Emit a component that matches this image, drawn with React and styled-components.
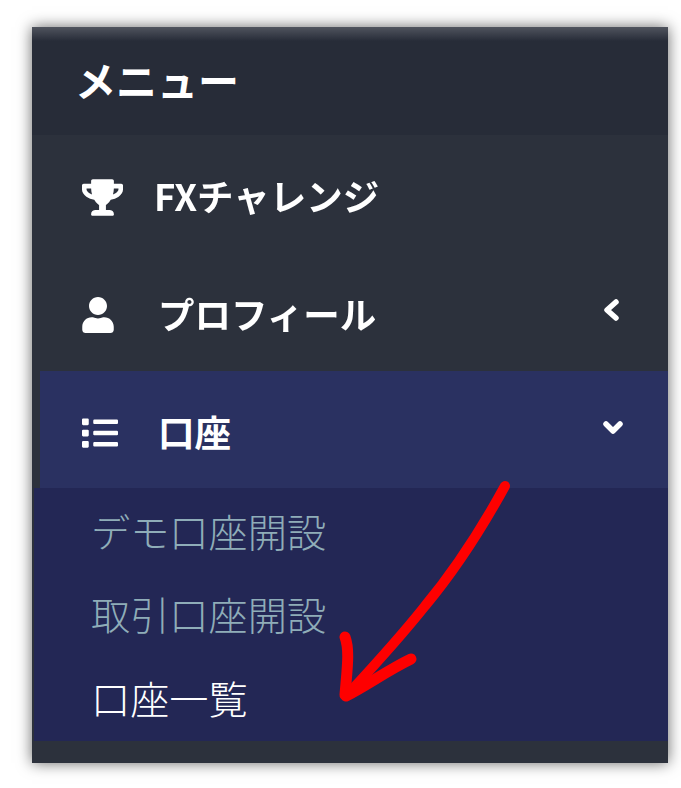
import React from "react";
import styled, { createGlobalStyle } from "styled-components";
import { FaTrophy, FaUser, FaList } from "react-icons/fa";

const GlobalStyle = createGlobalStyle`
  html, body {
    margin: 0;
    padding: 0;
    background: #fff;
  }
  body {
    font-family: "Noto Sans CJK JP", "Noto Sans", sans-serif;
  }
`;

const Page = styled.div`
  width: 681px;
  height: 788px;
  box-sizing: border-box;
  padding: 27px 13px 25px 32px;
  overflow: hidden;
`;

const Panel = styled.nav`
  position: relative;
  height: 736px;
  display: flex;
  flex-direction: column;
  background: #2c313c;
  box-shadow: 0 0 14px rgba(0, 0, 0, 0.6);
  filter: blur(0.4px);
`;

const Header = styled.div`
  height: 108px;
  box-sizing: border-box;
  padding: 0 43px 4px;
  display: flex;
  align-items: center;
  background: linear-gradient(#50545e 0, #272c38 14px);
  color: #fff;
  font-size: 41px;
  font-weight: 700;
`;

const Row = styled.div`
  height: ${(p) => (p.$active ? "117px" : "118px")};
  box-sizing: border-box;
  margin-left: ${(p) => (p.$active ? "8px" : "0")};
  padding: 0 ${(p) => (p.$active ? "45px" : "47px")} 0 ${(p) => (p.$active ? "42px" : "50px")};
  display: flex;
  align-items: center;
  background: ${(p) => (p.$active ? "#2a3161" : "transparent")};
  color: #fff;
`;

const IconSlot = styled.span`
  width: ${(p) => p.$width}px;
  margin-left: ${(p) => p.$shift || 0}px;
  flex: none;
  display: flex;
  align-items: center;
  font-size: ${(p) => p.$size}px;
  transform: translateY(3px);
`;

const Label = styled.span`
  flex: 1;
  font-size: 36.5px;
  font-weight: 700;
  line-height: 1;
  transform: translateY(${(p) => (p.$active ? "3px" : "2px")});
`;

const Caret = styled.svg`
  width: 20px;
  height: 24px;
  flex: none;
  fill: none;
  stroke: #fff;
  stroke-width: 5.5;
  stroke-linecap: round;
  stroke-linejoin: round;
  transform: translateY(-2px);
`;

const SubMenu = styled.ul`
  height: 253px;
  box-sizing: border-box;
  margin: 0 0 0 2px;
  padding: 0 0 0 57px;
  list-style: none;
  background: #232755;
`;

const SubItem = styled.li`
  height: 83.5px;
  display: flex;
  align-items: center;
  font-size: 39.2px;
  font-weight: 300;
  color: ${(p) => (p.$current ? "#fff" : "#8fadb8")};
`;

const Footer = styled.div`
  flex: 1;
`;

const Arrow = styled.svg`
  position: absolute;
  left: -32px;
  top: -27px;
  width: 681px;
  height: 788px;
  pointer-events: none;
`;

export default function App() {
  return (
    <>
      <GlobalStyle />
      <Page>
        <Panel>
          <Header>メニュー</Header>
          <Row>
            <IconSlot $width={72} $size={41}>
              <FaTrophy />
            </IconSlot>
            <Label>FXチャレンジ</Label>
          </Row>
          <Row>
            <IconSlot $width={78} $shift={-2} $size={36}>
              <FaUser />
            </IconSlot>
            <Label>プロフィール</Label>
            <Caret viewBox="0 0 20 24">
              <polyline points="15,4 6,12 15,20" />
            </Caret>
          </Row>
          <Row $active>
            <IconSlot $width={76} $size={36}>
              <FaList />
            </IconSlot>
            <Label $active>口座</Label>
            <Caret viewBox="0 0 20 24">
              <polyline points="3,8 10,15 17,8" />
            </Caret>
          </Row>
          <SubMenu>
            <SubItem>デモ口座開設</SubItem>
            <SubItem>取引口座開設</SubItem>
            <SubItem $current>口座一覧</SubItem>
          </SubMenu>
          <Footer />
          <Arrow viewBox="0 0 681 788" fill="none" stroke="#fe0000" strokeLinecap="round" strokeLinejoin="round">
            <path d="M505 486 C482 528 455 570 425 606 C398 640 372 668 347 695" strokeWidth="10" />
            <path d="M345 637 C350 650 347 670 345 695" strokeWidth="11" />
            <path d="M411 659 C388 670 366 686 346 696" strokeWidth="11" />
          </Arrow>
        </Panel>
      </Page>
    </>
  );
}
